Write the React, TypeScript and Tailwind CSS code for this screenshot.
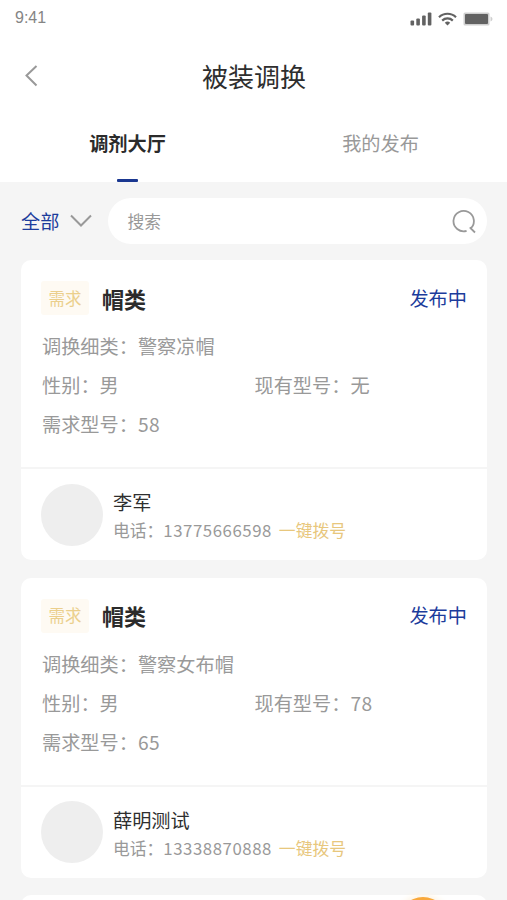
import * as React from 'react';

type Listing = {
    id: number;
    category: string;
    detail: string;
    gender: string;
    current: string;
    wanted: string;
    name: string;
    phone: string;
};

const listings: Listing[] = [
    {
        id: 1,
        category: '帽类',
        detail: '警察凉帽',
        gender: '男',
        current: '无',
        wanted: '58',
        name: '李军',
        phone: '13775666598',
    },
    {
        id: 2,
        category: '帽类',
        detail: '警察女布帽',
        gender: '男',
        current: '78',
        wanted: '65',
        name: '薛明测试',
        phone: '13338870888',
    },
];

function StatusBar() {
    return (
        <div className="flex h-9 items-center justify-between pr-[14px] pl-[15px]">
            <span className="font-['Liberation_Sans',sans-serif] text-[16px] leading-4 text-[#858585]">
                9:41
            </span>
            <div className="flex items-center gap-[6px] pt-px text-[#626262]">
                <svg width="22" height="14" viewBox="0 0 22 14" fill="currentColor">
                    <rect x="0.5" y="8.5" width="3.6" height="5" rx="1" />
                    <rect x="6.3" y="6.5" width="3.6" height="7" rx="1" />
                    <rect x="12.1" y="3.5" width="3.6" height="10" rx="1" />
                    <rect x="17.8" y="0.5" width="3.6" height="13" rx="1" />
                </svg>
                <svg
                    width="19"
                    height="14"
                    viewBox="0 0 19 14"
                    fill="none"
                    stroke="currentColor"
                    strokeWidth="2.2"
                >
                    <path d="M1 5.2a12.2 12.2 0 0 1 17 0" />
                    <path d="M4.2 8.6a7.6 7.6 0 0 1 10.6 0" />
                    <path
                        d="M6.8 10.8a4 4 0 0 1 5.4 0L9.5 13.6z"
                        fill="currentColor"
                        stroke="none"
                    />
                </svg>
                <svg width="30" height="14" viewBox="0 0 30 14">
                    <rect x="0.5" y="0.5" width="26" height="13" rx="1.5" fill="#cfcfcf" />
                    <rect x="2" y="2" width="23" height="10" rx="1" fill="#626262" />
                    <path d="M27.5 4.5q2 .8 2 2.5t-2 2.5z" fill="#cfcfcf" />
                </svg>
            </div>
        </div>
    );
}

function Field({ label, value }: { label: string; value: string }) {
    return (
        <div>
            {label}：
            <span className={/^\d+$/.test(value) ? 'tracking-[0.5px]' : ''}>{value}</span>
        </div>
    );
}

function ListingCard({ item }: { item: Listing }) {
    return (
        <div className="h-[300px] shrink-0 rounded-[10px] bg-white">
            <div className="h-[209px] border-b-2 border-[#f5f5f5] px-5 pt-[21px]">
                <div className="flex h-[34px] items-center">
                    <span className="flex h-[34px] w-[48px] items-center justify-center rounded-[3px] bg-[#fefaf3] text-[16.5px] text-[#ebcf8c]">
                        需求
                    </span>
                    <span className="ml-[13px] text-[22px] font-bold text-[#2b2b2b]">
                        {item.category}
                    </span>
                    <span className="ml-auto text-[19.2px] text-[#1c3c9c]">发布中</span>
                </div>
                <div className="mt-3 grid grid-cols-2 pl-px text-[19.2px] leading-[39px] text-[#999]">
                    <div className="col-span-2">
                        <Field label="调换细类" value={item.detail} />
                    </div>
                    <Field label="性别" value={item.gender} />
                    <Field label="现有型号" value={item.current} />
                    <Field label="需求型号" value={item.wanted} />
                </div>
            </div>
            <div className="flex h-[91px] items-center pl-5">
                <div className="h-[62px] w-[62px] rounded-full bg-[#eee]" />
                <div className="ml-[10px] pt-[3px]">
                    <div className="text-[19.2px] leading-[29px] text-[#2e2e2e]">
                        {item.name}
                    </div>
                    <div className="flex text-[16.8px] leading-[27px] text-[#999]">
                        <span>电话：</span>
                        <span className="tracking-[0.55px]">{item.phone}</span>
                        <span className="ml-[7px] text-[#e8c77d]">一键拨号</span>
                    </div>
                </div>
            </div>
        </div>
    );
}

export default function App() {
    const [tab, setTab] = React.useState(0);

    return (
        <div className="relative flex h-[900px] w-[507px] flex-col overflow-hidden bg-[#f5f5f5] font-['Noto_Sans_CJK_SC',sans-serif]">
            <header className="h-[182px] shrink-0 bg-white">
                <StatusBar />
                <div className="grid h-[80px] grid-cols-[60px_1fr_60px] items-center">
                    <svg
                        className="ml-[24px]"
                        width="14"
                        height="22"
                        viewBox="0 0 14 22"
                        fill="none"
                        stroke="#999"
                        strokeWidth="2"
                    >
                        <path d="M12.5 1 2.5 10.5l10 10" />
                    </svg>
                    <h1 className="pb-px pl-px text-center text-[26px] text-[#2e2e2e]">被装调换</h1>
                </div>
                <div className="grid h-[66px] grid-cols-2 pl-px text-[19.2px]">
                    {['调剂大厅', '我的发布'].map((label, i) => (
                        <button
                            key={label}
                            onClick={() => setTab(i)}
                            className="flex flex-col items-center justify-between pt-[12px]"
                        >
                            <span
                                className={
                                    tab === i
                                        ? 'leading-[30px] font-bold text-[#2b2b2b]'
                                        : 'leading-[30px] text-[#999]'
                                }
                            >
                                {label}
                            </span>
                            {tab === i && (
                                <span className="h-[3px] w-[21px] rounded-[1px] bg-[#1a3790]" />
                            )}
                        </button>
                    ))}
                </div>
            </header>

            <div className="mt-4 flex h-[46px] shrink-0 items-center pr-5 pl-[21px]">
                <span className="pt-px text-[19.2px] text-[#1c3c9c]">全部</span>
                <svg
                    className="ml-[11px]"
                    width="22"
                    height="14"
                    viewBox="0 0 22 14"
                    fill="none"
                    stroke="#999"
                    strokeWidth="2"
                >
                    <path d="m1 1.5 10 10 10-10" />
                </svg>
                <div className="ml-[16px] flex h-[46px] flex-1 items-center justify-between rounded-full bg-white pr-[11px] pl-[19px]">
                    <span className="pt-px text-[16.8px] text-[#999]">搜索</span>
                    <svg
                        width="25"
                        height="25"
                        viewBox="0 0 25 25"
                        fill="none"
                        stroke="#999"
                        strokeWidth="1.8"
                    >
                        <path d="M15.6 21.9A10.2 10.2 0 1 1 19.4 19.8" />
                        <path d="M18.8 18.3 24 23.5" />
                    </svg>
                </div>
            </div>

            <main className="mt-4 flex flex-col gap-[17.5px] pr-5 pl-[21px]">
                {listings.map((item) => (
                    <ListingCard key={item.id} item={item} />
                ))}
                <div className="h-[300px] shrink-0 rounded-[10px] bg-white" />
            </main>

            <div className="absolute top-[897px] left-[398px] h-[50px] w-[50px] rounded-full bg-[#f9a83a] shadow-[0_0_6px_2px_#fdf3e3]" />
        </div>
    );
}
